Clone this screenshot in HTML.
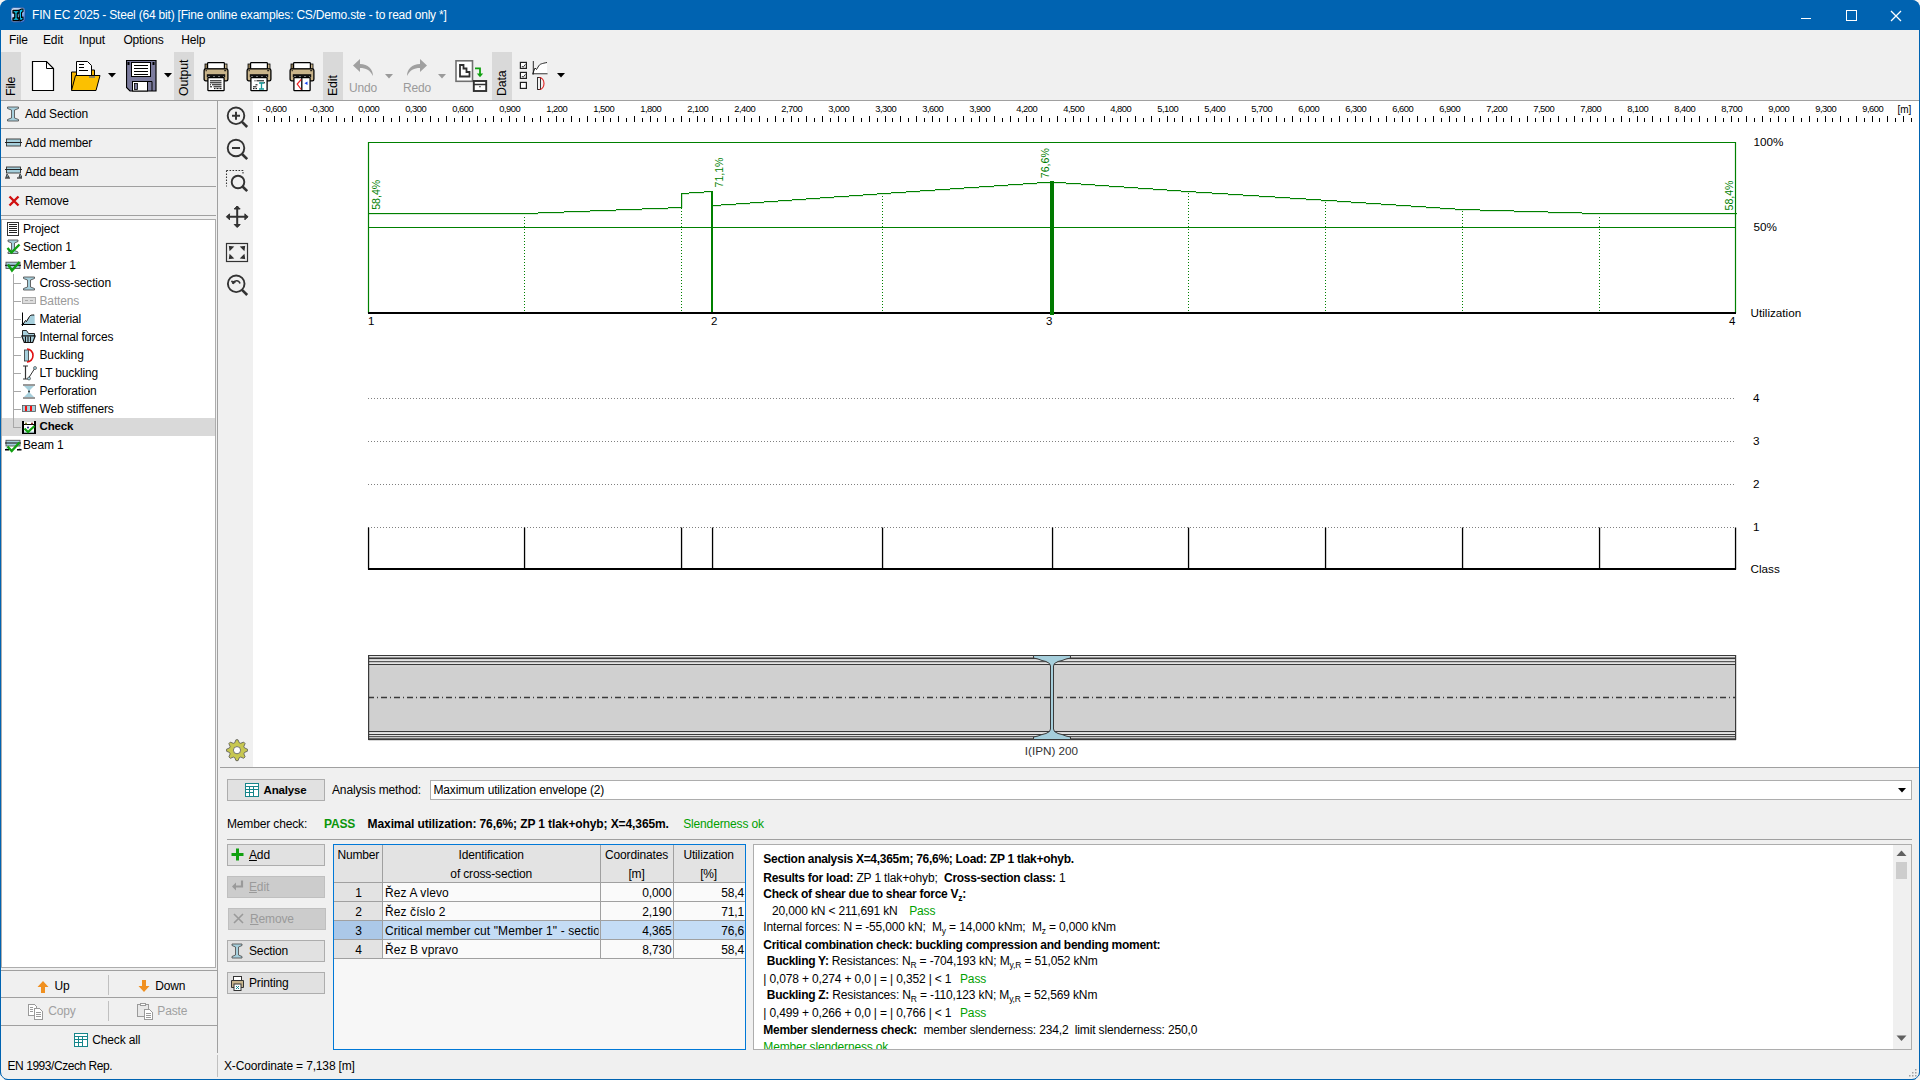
<!DOCTYPE html>
<html><head><meta charset="utf-8"><style>
html,body{margin:0;padding:0;width:1920px;height:1080px;overflow:hidden;background:#f6f5f3;font-family:"Liberation Sans",sans-serif;}
.r{position:absolute;}
.t{position:absolute;white-space:nowrap;letter-spacing:-0.15px;}
b{font-weight:bold;letter-spacing:-0.28px;}
</style></head><body>
<div style="position:absolute;left:0;top:0;width:1920px;height:1080px;border-radius:8px;overflow:hidden;background:#f0f0f0">
<div class="r" style="left:0px;top:0px;width:1920px;height:30px;background:#0063b1;"></div>
<svg class="r" style="left:10px;top:7px" width="17" height="17" viewBox="0 0 17 17">
<defs><linearGradient id="ag" x1="0" y1="0" x2="1" y2="1"><stop offset="0" stop-color="#eef4ff"/><stop offset="0.5" stop-color="#a8c8f8"/><stop offset="1" stop-color="#2f6fd0"/></linearGradient></defs>
<rect x="1" y="0.6" width="14" height="14.6" rx="3" fill="url(#ag)" stroke="#1a4a9a" stroke-width="0.7"/>
<path d="M8.5 3.5l3-1.5h1.5v2.5l-1.5 1v5l1.5-0.5v2.5l-3 1.5z" fill="#10c8f0" stroke="#000" stroke-width="1.1" stroke-linejoin="round"/>
<path d="M3 3.5h6v2.5h-1.8v5h1.8v2.5h-6v-2.5h1.8v-5h-1.8z" fill="#10d8ff" stroke="#000" stroke-width="1.3" stroke-linejoin="round"/>
</svg>
<div class="t" style="left:32px;top:8.84px;font-size:12px;line-height:12px;font-weight:normal;color:#fff;letter-spacing:-0.2px;">FIN EC 2025 - Steel (64 bit) [Fine online examples: CS/Demo.ste - to read only *]</div>
<div class="r" style="left:1801px;top:18px;width:10px;height:1.2px;background:#fff;"></div>
<div class="r" style="left:1846px;top:10px;width:8.5px;height:8.5px;border:1.2px solid #fff"></div>
<svg class="r" style="left:1890px;top:10px" width="12" height="12" viewBox="0 0 12 12"><path d="M1 1L11 11M11 1L1 11" stroke="#fff" stroke-width="1.3"/></svg>
<div class="r" style="left:0px;top:30px;width:1px;height:1050px;background:#0063b1;"></div>
<div class="r" style="left:1919px;top:30px;width:1px;height:1050px;background:#0063b1;"></div>
<div class="r" style="left:0px;top:1079px;width:1920px;height:1px;background:#0063b1;"></div>
<div class="t" style="left:9px;top:33.84px;font-size:12px;line-height:12px;font-weight:normal;color:#000;">File</div>
<div class="t" style="left:43px;top:33.84px;font-size:12px;line-height:12px;font-weight:normal;color:#000;">Edit</div>
<div class="t" style="left:79px;top:33.84px;font-size:12px;line-height:12px;font-weight:normal;color:#000;">Input</div>
<div class="t" style="left:123.4px;top:33.84px;font-size:12px;line-height:12px;font-weight:normal;color:#000;">Options</div>
<div class="t" style="left:181.3px;top:33.84px;font-size:12px;line-height:12px;font-weight:normal;color:#000;">Help</div>
<div class="r" style="left:1px;top:52px;width:20px;height:48px;background:#d9d9d9;"></div>
<div class="t" style="left:11.0px;top:95.5px;font-size:12.4px;line-height:13px;transform-origin:0 0;transform:rotate(-90deg) translate(0,-50%);white-space:nowrap;color:#000">File</div>
<div class="r" style="left:174px;top:52px;width:20px;height:48px;background:#d9d9d9;"></div>
<div class="t" style="left:184.0px;top:95.5px;font-size:12.4px;line-height:13px;transform-origin:0 0;transform:rotate(-90deg) translate(0,-50%);white-space:nowrap;color:#000">Output</div>
<div class="r" style="left:323px;top:52px;width:20px;height:48px;background:#d9d9d9;"></div>
<div class="t" style="left:333.0px;top:95.5px;font-size:12.4px;line-height:13px;transform-origin:0 0;transform:rotate(-90deg) translate(0,-50%);white-space:nowrap;color:#000">Edit</div>
<div class="r" style="left:492px;top:52px;width:20px;height:48px;background:#d9d9d9;"></div>
<div class="t" style="left:502.0px;top:95.5px;font-size:12.4px;line-height:13px;transform-origin:0 0;transform:rotate(-90deg) translate(0,-50%);white-space:nowrap;color:#000">Data</div>
<div class="r" style="left:1px;top:100px;width:1918px;height:1px;background:#a0a0a0;"></div>
<svg class="r" style="left:31px;top:60px" width="24" height="32" viewBox="0 0 24 32">
<path d="M1.5 1.5h14l7 7v22h-21z" fill="#fff" stroke="#000" stroke-width="1.2"/><path d="M15.5 1.5v7h7" fill="none" stroke="#000" stroke-width="1"/></svg>
<svg class="r" style="left:71px;top:60px" width="30" height="32" viewBox="0 0 30 32">
<path d="M0.5 12h9l2-2h12v20h-23z" fill="#f4b400" stroke="#000" stroke-width="1"/>
<path d="M5.5 1.5h11l4 4v18h-15z" fill="#fff" stroke="#000" stroke-width="1"/>
<path d="M8 4.5h5M8 7.5h5M8 10.5h9" stroke="#000" stroke-width="1" shape-rendering="crispEdges"/>
<path d="M0.5 30.5l4-15h24.5l-4 15z" fill="#fcc000" stroke="#000" stroke-width="1"/>
<path d="M18 17h6" stroke="#777" stroke-width="1.5"/></svg>
<svg class="r" style="left:108px;top:73px" width="9" height="5"><path d="M0 0h8l-4 4.5z" fill="#000"/></svg>
<svg class="r" style="left:126px;top:60px" width="31" height="32" viewBox="0 0 31 32">
<path d="M0.5 0.5h29.5v30.5h-26l-3.5-3.5z" fill="#7b7b9d" stroke="#000" stroke-width="1.2"/>
<rect x="5.5" y="2.5" width="19" height="14" fill="#fff" stroke="#000" stroke-width="1"/>
<path d="M8 5.5h14M8 8.5h14M8 11.5h14M8 14h14" stroke="#000" stroke-width="1" shape-rendering="crispEdges"/>
<rect x="6.5" y="21.5" width="15" height="9.5" fill="#fff" stroke="#000" stroke-width="1"/>
<rect x="8.5" y="23.5" width="3" height="6" fill="#7b7b9d" stroke="#000" stroke-width="0.8"/>
<path d="M22 21.5h4v9.5" fill="none" stroke="#000" stroke-width="1"/>
<rect x="1.5" y="2" width="2" height="3" fill="#000"/><rect x="26.5" y="2" width="2" height="3" fill="#000"/></svg>
<svg class="r" style="left:164px;top:73px" width="9" height="5"><path d="M0 0h8l-4 4.5z" fill="#000"/></svg>
<svg class="r" style="left:203px;top:62px" width="27" height="30" viewBox="0 0 27 30">
<rect x="2" y="2" width="3.5" height="5" fill="#8d7a55" stroke="#000" stroke-width="0.8"/><rect x="20.5" y="2" width="3.5" height="5" fill="#c9b48a" stroke="#000" stroke-width="0.8"/>
<rect x="4.6" y="0.6" width="16.8" height="6.4" rx="0.8" fill="#fff" stroke="#000" stroke-width="1.2"/>
<rect x="1.1" y="6.8" width="23.8" height="12" rx="1.6" fill="#c9b48a" stroke="#000" stroke-width="1.3"/>
<rect x="2.6" y="8.2" width="1.2" height="1" fill="#000"/><rect x="21.2" y="8.2" width="2" height="1" fill="#000"/>
<rect x="3.8" y="12.2" width="18.4" height="3" fill="#111"/><path d="M5 14.5h16" stroke="#777" stroke-width="1" stroke-dasharray="2 3"/>
<rect x="4.9" y="15.6" width="16.2" height="13" rx="0.6" fill="#fff" stroke="#000" stroke-width="1.3"/>
<path d="M7 18.8h11.5M7 20.8h11.5M9 22.8h9.5M7 24.8h2M10.5 24.8h8M11 26.6h1.5M13.5 26.6h2M16.5 26.6h2" stroke="#000" stroke-width="1"/><rect x="7" y="22.3" width="1" height="1" fill="#000"/></svg>
<svg class="r" style="left:246px;top:62px" width="27" height="30" viewBox="0 0 27 30">
<rect x="2" y="2" width="3.5" height="5" fill="#8d7a55" stroke="#000" stroke-width="0.8"/><rect x="20.5" y="2" width="3.5" height="5" fill="#c9b48a" stroke="#000" stroke-width="0.8"/>
<rect x="4.6" y="0.6" width="16.8" height="6.4" rx="0.8" fill="#fff" stroke="#000" stroke-width="1.2"/>
<rect x="1.1" y="6.8" width="23.8" height="12" rx="1.6" fill="#c9b48a" stroke="#000" stroke-width="1.3"/>
<rect x="2.6" y="8.2" width="1.2" height="1" fill="#000"/><rect x="21.2" y="8.2" width="2" height="1" fill="#000"/>
<rect x="3.8" y="12.2" width="18.4" height="3" fill="#111"/><path d="M5 14.5h16" stroke="#777" stroke-width="1" stroke-dasharray="2 3"/>
<rect x="4.9" y="15.6" width="16.2" height="13" rx="0.6" fill="#fff" stroke="#000" stroke-width="1.3"/>
<path d="M8.5 18.8h1M10.5 18.8h7.5M14.5 20.8h1M16.5 20.8h1M18 20.8h1M9.5 22.8h2M7 24.8h3.5M7 26.6h1.5M9.5 26.6h1.5" stroke="#000" stroke-width="1"/><path d="M13 21h5M15.5 21v6M13 27h5" stroke="#1a9a9a" stroke-width="1.3"/></svg>
<svg class="r" style="left:289px;top:62px" width="27" height="30" viewBox="0 0 27 30">
<rect x="2" y="2" width="3.5" height="5" fill="#8d7a55" stroke="#000" stroke-width="0.8"/><rect x="20.5" y="2" width="3.5" height="5" fill="#c9b48a" stroke="#000" stroke-width="0.8"/>
<rect x="4.6" y="0.6" width="16.8" height="6.4" rx="0.8" fill="#fff" stroke="#000" stroke-width="1.2"/>
<rect x="1.1" y="6.8" width="23.8" height="12" rx="1.6" fill="#c9b48a" stroke="#000" stroke-width="1.3"/>
<rect x="2.6" y="8.2" width="1.2" height="1" fill="#000"/><rect x="21.2" y="8.2" width="2" height="1" fill="#000"/>
<rect x="3.8" y="12.2" width="18.4" height="3" fill="#111"/><path d="M5 14.5h16" stroke="#777" stroke-width="1" stroke-dasharray="2 3"/>
<rect x="4.9" y="15.6" width="16.2" height="13" rx="0.6" fill="#fff" stroke="#000" stroke-width="1.3"/>
<path d="M12.8 16v12.5" stroke="#000" stroke-width="1.3"/><path d="M12.2 17.5l-4 4.5l4 5.5" fill="none" stroke="#f02020" stroke-width="1.2"/><path d="M18.5 19.5l-3 1.7l3 1.7z" fill="#1040f0"/></svg>
<svg class="r" style="left:352px;top:58px" width="25" height="19" viewBox="0 0 25 19">
<path d="M8 1L1 7.5L8 14v-4c6 0 10 2 13 8c0-7-5-12-13-12z" fill="#a0a0a0"/></svg>
<div class="t" style="left:349px;top:82.34px;font-size:12px;line-height:12px;font-weight:normal;color:#9a9a9a;">Undo</div>
<svg class="r" style="left:385px;top:74px" width="9" height="5"><path d="M0 0h8l-4 4.5z" fill="#9a9a9a"/></svg>
<svg class="r" style="left:403px;top:58px" width="25" height="19" viewBox="0 0 25 19">
<path d="M17 1L24 7.5L17 14v-4c-6 0-10 2-13 8c0-7 5-12 13-12z" fill="#a0a0a0"/></svg>
<div class="t" style="left:403px;top:82.34px;font-size:12px;line-height:12px;font-weight:normal;color:#9a9a9a;">Redo</div>
<svg class="r" style="left:438px;top:74px" width="9" height="5"><path d="M0 0h8l-4 4.5z" fill="#9a9a9a"/></svg>
<svg class="r" style="left:454px;top:59px" width="34" height="34" viewBox="0 0 34 34">
<rect x="2" y="1.8" width="16.5" height="20.5" fill="#fff" stroke="#707070" stroke-width="1.6"/>
<path d="M6 6h3.5v3.5h3v3.5h3v4.5h-9.5z" fill="#fff" stroke="#303030" stroke-width="1.8" stroke-linejoin="miter"/>
<path d="M21 9.3h5v7" fill="none" stroke="#10a010" stroke-width="1.8"/><path d="M22.8 14.5h6.4l-3.2 3.8z" fill="#10a010"/>
<rect x="19.8" y="22" width="12.4" height="10" fill="#fff" stroke="#303030" stroke-width="1.9"/>
<path d="M20 25.5h12" stroke="#303030" stroke-width="1.5"/><rect x="25.3" y="27" width="1.3" height="1.3" fill="#303030"/></svg>
<svg class="r" style="left:519px;top:61px" width="30" height="30" viewBox="0 0 30 30">
<rect x="1.4" y="1.4" width="6" height="6" fill="#fff" stroke="#202020" stroke-width="1.2"/><path d="M2.8 5l1.3 1.3l2.4-3" fill="none" stroke="#202020" stroke-width="0.9"/>
<rect x="1.4" y="11.4" width="6" height="6" fill="#fff" stroke="#202020" stroke-width="1.2"/><path d="M2.8 15l1.3 1.3l2.4-3" fill="none" stroke="#202020" stroke-width="0.9"/>
<rect x="1.4" y="21.4" width="6" height="6" fill="#fff" stroke="#202020" stroke-width="1.2"/>
<path d="M14 11.5l2-4.5l1.5 1.5l2.5-4c1-1.5 3-2 8-3v12.5h-14z" fill="#fff"/>
<path d="M14.3 0v13.5M13 12.8h15.5" fill="none" stroke="#111" stroke-width="0.9"/><path d="M14 12l2-5l1.5 1.5l2.5-4c1-1.5 3-2 8-3" fill="none" stroke="#111" stroke-width="0.9"/>
<rect x="18.6" y="16.5" width="2.8" height="12" fill="#fff" stroke="#111" stroke-width="0.9"/><path d="M20.5 16.5a4.5 6 0 0 1 0 12" fill="none" stroke="#e02020" stroke-width="1.1"/></svg>
<svg class="r" style="left:557px;top:73px" width="9" height="5"><path d="M0 0h8l-4 4.5z" fill="#000"/></svg>
<div class="r" style="left:1px;top:128px;width:215px;height:1px;background:#a0a0a0;"></div>
<div class="t" style="left:25px;top:108.14px;font-size:12px;line-height:12px;font-weight:normal;color:#000;">Add Section</div>
<div class="r" style="left:1px;top:157px;width:215px;height:1px;background:#a0a0a0;"></div>
<div class="t" style="left:25px;top:137.14px;font-size:12px;line-height:12px;font-weight:normal;color:#000;">Add member</div>
<div class="r" style="left:1px;top:186px;width:215px;height:1px;background:#a0a0a0;"></div>
<div class="t" style="left:25px;top:166.14px;font-size:12px;line-height:12px;font-weight:normal;color:#000;">Add beam</div>
<div class="r" style="left:1px;top:215px;width:215px;height:1px;background:#a0a0a0;"></div>
<div class="t" style="left:25px;top:195.14px;font-size:12px;line-height:12px;font-weight:normal;color:#000;">Remove</div>
<svg class="r" style="left:6px;top:106px" width="14" height="16" viewBox="0 0 14 16">
<path d="M1.5 1h11v1.5l-4 1.5v8l4 1.5v1.5h-11v-1.5l4-1.5v-8l-4-1.5z" fill="#a6cfdc" stroke="#555" stroke-width="0.9"/></svg>
<svg class="r" style="left:5px;top:138px" width="17" height="9" viewBox="0 0 17 9">
<rect x="1.5" y="1" width="14" height="7" fill="#a6cfdc" stroke="#333" stroke-width="0.9"/><path d="M0 4.5h17" stroke="#222" stroke-width="1"/></svg>
<svg class="r" style="left:5px;top:166px" width="17" height="13" viewBox="0 0 17 13">
<rect x="1.5" y="1" width="14" height="6" fill="#a6cfdc" stroke="#333" stroke-width="0.9"/><path d="M0 3.5h17" stroke="#222" stroke-width="1"/>
<path d="M2 8l2 3h-3zM15 8l2 3h-3z" fill="#a6cfdc" stroke="#222" stroke-width="0.8"/><path d="M0 12h5M12 12h5" stroke="#000" stroke-width="1.2"/></svg>
<svg class="r" style="left:8px;top:195px" width="12" height="12" viewBox="0 0 12 12"><path d="M1.5 1.5L10.5 10.5M10.5 1.5L1.5 10.5" stroke="#d01010" stroke-width="2.4"/></svg>
<div class="r" style="left:1px;top:219px;width:215px;height:749px;background:#fff;border:1px solid #adadad;box-sizing:border-box"></div>
<div class="r" style="left:2px;top:418px;width:213px;height:18px;background:#d9d9d9;"></div>
<svg class="r" style="left:0;top:270px" width="40" height="170" shape-rendering="crispEdges"><path d="M13.5 4V157M13 13.5h8M13 31.5h8M13 49.5h8M13 67.5h8M13 85.5h8M13 103.5h8M13 121.5h8M13 139.5h8M13 157.5h8" stroke="#a8a8a8" stroke-width="1"/></svg>
<div class="t" style="left:23px;top:223.04px;font-size:12px;line-height:12px;font-weight:normal;color:#000;">Project</div>
<div class="t" style="left:23px;top:241.04px;font-size:12px;line-height:12px;font-weight:normal;color:#000;">Section 1</div>
<div class="t" style="left:23px;top:259.04px;font-size:12px;line-height:12px;font-weight:normal;color:#000;">Member 1</div>
<div class="t" style="left:39.5px;top:277.04px;font-size:12px;line-height:12px;font-weight:normal;color:#000;">Cross-section</div>
<div class="t" style="left:39.5px;top:295.04px;font-size:12px;line-height:12px;font-weight:normal;color:#9a9a9a;">Battens</div>
<div class="t" style="left:39.5px;top:313.04px;font-size:12px;line-height:12px;font-weight:normal;color:#000;">Material</div>
<div class="t" style="left:39.5px;top:331.04px;font-size:12px;line-height:12px;font-weight:normal;color:#000;">Internal forces</div>
<div class="t" style="left:39.5px;top:349.04px;font-size:12px;line-height:12px;font-weight:normal;color:#000;">Buckling</div>
<div class="t" style="left:39.5px;top:367.04px;font-size:12px;line-height:12px;font-weight:normal;color:#000;">LT buckling</div>
<div class="t" style="left:39.5px;top:385.04px;font-size:12px;line-height:12px;font-weight:normal;color:#000;">Perforation</div>
<div class="t" style="left:39.5px;top:403.04px;font-size:12px;line-height:12px;font-weight:normal;color:#000;">Web stiffeners</div>
<div class="t" style="left:39.5px;top:421.47px;font-size:11.5px;line-height:11.5px;font-weight:bold;color:#000;">Check</div>
<div class="t" style="left:23px;top:439.04px;font-size:12px;line-height:12px;font-weight:normal;color:#000;">Beam 1</div>
<svg class="r" style="left:6px;top:221px" width="14" height="16" viewBox="0 0 14 16" shape-rendering="crispEdges"><rect x="1.5" y="1.5" width="11" height="13" fill="#fff" stroke="#333" stroke-width="1"/><path d="M3 3.5h8M3 5.5h8M3 7.5h8M3 9.5h8M3 11.5h8" stroke="#222" stroke-width="1"/></svg>
<svg class="r" style="left:6px;top:239px" width="15" height="16" viewBox="0 0 15 16"><path d="M2 1h10v1.5l-3.5 1.5v7.5l3.5 1.5v1.5h-10v-1.5l3.5-1.5v-7.5l-3.5-1.5z" fill="#a6cfdc" stroke="#555" stroke-width="0.9"/><path d="M1.5 9l4 4.5l8-8" fill="none" stroke="#11a011" stroke-width="2.4"/></svg>
<svg class="r" style="left:4px;top:258px" width="18" height="16" viewBox="0 0 18 16"><rect x="2" y="4.2" width="14" height="6.3" fill="#a6cfdc" stroke="#555" stroke-width="0.9"/><path d="M1 7.3h16" stroke="#111" stroke-width="1"/><path d="M4 6.5l4 6l7.5-8.5" fill="none" stroke="#11a011" stroke-width="2.4"/></svg>
<svg class="r" style="left:4px;top:438px" width="18" height="15" viewBox="0 0 18 15"><rect x="2" y="2.3" width="14" height="5.7" fill="#a6cfdc" stroke="#555" stroke-width="0.9"/><path d="M1 5h16" stroke="#111" stroke-width="1"/><path d="M2.5 9.5l2 2.3h-3.5zM15.5 9.5l2 2.3h-3.5z" fill="#a6cfdc"/><path d="M1 11.8h4M13 11.8h4.5" stroke="#000" stroke-width="1.5"/><path d="M3.5 8.5l4.2 4.5l7.8-8.5" fill="none" stroke="#11a011" stroke-width="2.4"/></svg>
<svg class="r" style="left:22px;top:276px" width="14" height="15" viewBox="0 0 14 15"><path d="M1.5 1h11v1.5l-4 1.5v7l4 1.5v1.5h-11v-1.5l4-1.5v-7l-4-1.5z" fill="#a6cfdc" stroke="#555" stroke-width="0.9"/></svg>
<svg class="r" style="left:22px;top:296px" width="14" height="9" viewBox="0 0 14 9"><rect x="0.5" y="1.5" width="13" height="6" fill="#ddd" stroke="#aaa" stroke-width="1"/><path d="M3 4.5h3M8 4.5h3" stroke="#aaa" stroke-width="1"/></svg>
<svg class="r" style="left:21px;top:312px" width="15" height="15" viewBox="0 0 15 15"><path d="M2 12.5l3-4l1 1l3-5c1-1.5 2-1.5 4.7-1.5v9.5z" fill="#a6cfdc"/><path d="M1.5 0.5v13.5M0.5 12.5h14M1.5 13l3-4.5l1 1l3-5c1-1.5 2-1.5 4.7-1.5" fill="none" stroke="#000" stroke-width="1"/></svg>
<svg class="r" style="left:21px;top:329px" width="15" height="15" viewBox="0 0 15 15"><path d="M1.5 1.5h4l2 3h6v2.5h-12z" fill="#a6cfdc" stroke="#111" stroke-width="0.9"/><path d="M0.8 7h13.4l-2.5 6.5h-8.4z" fill="#a6cfdc" stroke="#111" stroke-width="1.2"/><path d="M4.5 7.5v5.5M7 7.5v5.5M9.5 7.5v5.5M12.5 6.8h1.6" stroke="#111" stroke-width="1.1"/></svg>
<svg class="r" style="left:23px;top:348px" width="12" height="15" viewBox="0 0 12 15"><rect x="1.5" y="2" width="4" height="11" fill="#a6cfdc" stroke="#333" stroke-width="0.8"/><path d="M4 1a6 6.5 0 0 1 0 13" fill="none" stroke="#e01010" stroke-width="1.6"/></svg>
<svg class="r" style="left:22px;top:365px" width="15" height="16" viewBox="0 0 15 16"><path d="M1 1h5M3.5 1v13M1 14h5" stroke="#333" stroke-width="1.2"/><path d="M6 14l7-11" stroke="#333" stroke-width="1"/><circle cx="13" cy="3" r="1.5" fill="#a6cfdc" stroke="#333" stroke-width="0.6"/><circle cx="7" cy="13.5" r="1.5" fill="#a6cfdc" stroke="#333" stroke-width="0.6"/></svg>
<svg class="r" style="left:22px;top:384px" width="14" height="15" viewBox="0 0 14 15"><path d="M1 1h12M1 14h12" stroke="#333" stroke-width="1"/><path d="M2 2h10l-4 4v3l4 4h-10l4-4v-3z" fill="#a6cfdc"/><circle cx="7" cy="7.5" r="1" fill="#333"/></svg>
<svg class="r" style="left:22px;top:404px" width="14" height="9" viewBox="0 0 14 9"><rect x="0.5" y="1.5" width="13" height="6" fill="#a6cfdc" stroke="#555" stroke-width="0.8"/><path d="M4 2v5M9 2v5" stroke="#f01010" stroke-width="2"/></svg>
<svg class="r" style="left:22px;top:421px" width="14" height="13" viewBox="0 0 14 13"><rect x="1" y="1" width="12" height="11" fill="#fff"/><path d="M1 0v12.6h12V0" fill="none" stroke="#000" stroke-width="2"/><path d="M1 3.5h12" stroke="#000" stroke-width="1"/><circle cx="4" cy="2.6" r="1" fill="#7a7a20"/><circle cx="10" cy="2.6" r="1" fill="#8a2020"/><circle cx="6" cy="6.5" r="1" fill="#202080"/><rect x="2" y="10.5" width="10" height="1" fill="#a6cfdc"/><path d="M2.5 7.5l3.5 3.5l6.5-6" fill="none" stroke="#11a011" stroke-width="2.3"/></svg>
<div class="r" style="left:1px;top:970px;width:216px;height:1px;background:#a0a0a0;"></div>
<div class="r" style="left:108px;top:975px;width:1px;height:20px;background:#c0c0c0;"></div>
<div class="r" style="left:1px;top:997px;width:216px;height:1px;background:#a0a0a0;"></div>
<div class="r" style="left:108px;top:1001px;width:1px;height:20px;background:#c0c0c0;"></div>
<div class="r" style="left:1px;top:1025px;width:216px;height:1px;background:#a0a0a0;"></div>
<div class="t" style="left:54.6px;top:979.84px;font-size:12px;line-height:12px;font-weight:normal;color:#000;">Up</div>
<div class="t" style="left:155.2px;top:979.84px;font-size:12px;line-height:12px;font-weight:normal;color:#000;">Down</div>
<div class="t" style="left:48.3px;top:1004.84px;font-size:12px;line-height:12px;font-weight:normal;color:#a0a0a0;">Copy</div>
<div class="t" style="left:157.3px;top:1004.84px;font-size:12px;line-height:12px;font-weight:normal;color:#a0a0a0;">Paste</div>
<div class="t" style="left:92.3px;top:1033.64px;font-size:12px;line-height:12px;font-weight:normal;color:#000;">Check all</div>
<svg class="r" style="left:37px;top:981px" width="12" height="12" viewBox="0 0 12 12"><path d="M6 0L11.5 6H8v6H4V6H0.5z" fill="#f09020"/></svg>
<svg class="r" style="left:138px;top:980px" width="12" height="12" viewBox="0 0 12 12"><path d="M6 12L11.5 6H8V0H4v6H0.5z" fill="#f09020"/></svg>
<svg class="r" style="left:28px;top:1004px" width="16" height="16" viewBox="0 0 16 16" shape-rendering="crispEdges"><path d="M0.5 0.5h6l2 2v9h-8z" fill="#fff" stroke="#9a9a9a" stroke-width="1"/><path d="M6.5 4.5h5l3 3v8h-8z" fill="#fff" stroke="#9a9a9a" stroke-width="1"/><path d="M2 3.5h3M2 5.5h3M2 7.5h3M8 8.5h5M8 10.5h5M8 12.5h5" stroke="#9a9a9a" stroke-width="1"/></svg>
<svg class="r" style="left:137px;top:1003px" width="17" height="17" viewBox="0 0 17 17" shape-rendering="crispEdges"><path d="M0.5 1.5h11v12h-11z" fill="#e8e8e8" stroke="#9a9a9a" stroke-width="1"/><rect x="3.5" y="0.5" width="5" height="2" fill="#fff" stroke="#9a9a9a" stroke-width="1"/><path d="M7.5 6.5h5l3 3v7h-8z" fill="#fff" stroke="#9a9a9a" stroke-width="1"/><path d="M9 10.5h5M9 12.5h5M9 14.5h5" stroke="#9a9a9a" stroke-width="1"/></svg>
<svg class="r" style="left:74px;top:1033px" width="14" height="14" viewBox="0 0 14 14" shape-rendering="crispEdges"><path d="M0 0h14v14h-14zM1 1H13V3H1zM1 4H4V6H1zM1 7H4V9H1zM1 10H4V13H1zM5 4H8V6H5zM5 7H8V9H5zM5 10H8V13H5zM9 4H13V6H9zM9 7H13V13H9z" fill="#15858a" fill-rule="evenodd"/><path d="M1 1H13V3H1zM1 4H4V6H1zM1 7H4V9H1zM1 10H4V13H1zM5 4H8V6H5zM5 7H8V9H5zM5 10H8V13H5zM9 4H13V6H9zM9 7H13V13H9z" fill="#fff"/></svg>
<div class="r" style="left:217px;top:1055px;width:1px;height:22px;background:#c0c0c0;"></div>
<div class="t" style="left:7.5px;top:1059.84px;font-size:12px;line-height:12px;font-weight:normal;color:#000;letter-spacing:-0.45px;">EN 1993/Czech Rep.</div>
<div class="t" style="left:224px;top:1059.84px;font-size:12px;line-height:12px;font-weight:normal;color:#000;">X-Coordinate = 7,138 [m]</div>
<div class="r" style="left:217px;top:100px;width:1px;height:953px;background:#a0a0a0;"></div>
<div class="r" style="left:253px;top:101px;width:1666px;height:666px;background:#fff;"></div>
<div class="r" style="left:220px;top:767px;width:1699px;height:1px;background:#a0a0a0;"></div>
<svg class="r" style="left:222px;top:101px" width="30" height="200" viewBox="0 0 30 200">
<g fill="none" stroke="#333" stroke-width="1.9">
<circle cx="14" cy="14.8" r="8.3"/><path d="M20 20.8l5.2 5.2" stroke-width="2.6"/><path d="M10 14.8h8M14 10.8v8" stroke-width="2"/>
<circle cx="14" cy="47" r="8.3"/><path d="M20 53l5.2 5.2" stroke-width="2.6"/><path d="M10 47h8" stroke-width="2"/>
<path d="M4.5 69.5h16.5v3M4.5 69.5v16" stroke-dasharray="1.6 1.4" stroke-width="1.1"/>
<circle cx="16" cy="81" r="6.3"/><path d="M20.5 85.5l4.7 4.7" stroke-width="2.6"/>
<rect x="4.5" y="142.5" width="21" height="18" stroke-width="1.2"/>
<circle cx="14.2" cy="182.8" r="8.3"/><path d="M20 188.8l5.2 5.2" stroke-width="2.6"/>
<path d="M11 182c1.5-3 6-3 7 0.5" stroke-width="1.6"/>
</g>
<path d="M15.2 105v21M4.7 115.8h21" stroke="#333" stroke-width="2"/>
<path d="M15.2 105l-3 3h6zM15.2 126.5l-3-3h6zM4.5 115.8l3-3v6zM25.9 115.8l-3-3v6z" fill="#333" stroke="#333" stroke-width="1"/>
<path d="M7.5 145.5l3.5 0.5l-3 3zM22.5 145.5l-3.5 0.5l3 3zM7.5 157.5l3.5-0.5l-3-3zM22.5 157.5l-3.5-0.5l3-3z" fill="#333" stroke="#333" stroke-width="1.2"/>
<path d="M9.5 180l1.5 3l2.5-2z" fill="#333" stroke="#333" stroke-width="1"/>
</svg>
<svg class="r" style="left:0;top:0" width="260" height="770"><polygon points="247.45,749.15 247.45,751.21 244.47,752.45 243.89,753.86 245.13,756.85 243.68,758.30 240.69,757.07 239.28,757.66 238.05,760.65 235.99,760.65 234.75,757.67 233.34,757.09 230.35,758.33 228.90,756.88 230.13,753.89 229.54,752.48 226.55,751.25 226.55,749.19 229.53,747.95 230.11,746.54 228.87,743.55 230.32,742.10 233.31,743.33 234.72,742.74 235.95,739.75 238.01,739.75 239.25,742.73 240.66,743.31 243.65,742.07 245.10,743.52 243.87,746.51 244.46,747.92" fill="#c7c751" stroke="#555" stroke-width="0.8" stroke-linejoin="round"/><circle cx="237" cy="750.2" r="3.6" fill="#fff" stroke="#555" stroke-width="0.8"/></svg>
<svg class="r" style="left:0;top:0;font-family:'Liberation Sans',sans-serif" width="1920" height="770"><rect x="258" y="116" width="1" height="6" fill="#000"/><rect x="266" y="118" width="1" height="4" fill="#000"/><rect x="274" y="116" width="1" height="6" fill="#000"/><rect x="281" y="118" width="1" height="4" fill="#000"/><rect x="289" y="116" width="1" height="6" fill="#000"/><rect x="297" y="118" width="1" height="4" fill="#000"/><rect x="305" y="116" width="1" height="6" fill="#000"/><rect x="313" y="118" width="1" height="4" fill="#000"/><rect x="321" y="116" width="1" height="6" fill="#000"/><rect x="328" y="118" width="1" height="4" fill="#000"/><rect x="336" y="116" width="1" height="6" fill="#000"/><rect x="344" y="118" width="1" height="4" fill="#000"/><rect x="352" y="116" width="1" height="6" fill="#000"/><rect x="360" y="118" width="1" height="4" fill="#000"/><rect x="368" y="116" width="1" height="6" fill="#000"/><rect x="375" y="118" width="1" height="4" fill="#000"/><rect x="383" y="116" width="1" height="6" fill="#000"/><rect x="391" y="118" width="1" height="4" fill="#000"/><rect x="399" y="116" width="1" height="6" fill="#000"/><rect x="407" y="118" width="1" height="4" fill="#000"/><rect x="415" y="116" width="1" height="6" fill="#000"/><rect x="422" y="118" width="1" height="4" fill="#000"/><rect x="430" y="116" width="1" height="6" fill="#000"/><rect x="438" y="118" width="1" height="4" fill="#000"/><rect x="446" y="116" width="1" height="6" fill="#000"/><rect x="454" y="118" width="1" height="4" fill="#000"/><rect x="462" y="116" width="1" height="6" fill="#000"/><rect x="469" y="118" width="1" height="4" fill="#000"/><rect x="477" y="116" width="1" height="6" fill="#000"/><rect x="485" y="118" width="1" height="4" fill="#000"/><rect x="493" y="116" width="1" height="6" fill="#000"/><rect x="501" y="118" width="1" height="4" fill="#000"/><rect x="509" y="116" width="1" height="6" fill="#000"/><rect x="516" y="118" width="1" height="4" fill="#000"/><rect x="524" y="116" width="1" height="6" fill="#000"/><rect x="532" y="118" width="1" height="4" fill="#000"/><rect x="540" y="116" width="1" height="6" fill="#000"/><rect x="548" y="118" width="1" height="4" fill="#000"/><rect x="556" y="116" width="1" height="6" fill="#000"/><rect x="563" y="118" width="1" height="4" fill="#000"/><rect x="571" y="116" width="1" height="6" fill="#000"/><rect x="579" y="118" width="1" height="4" fill="#000"/><rect x="587" y="116" width="1" height="6" fill="#000"/><rect x="595" y="118" width="1" height="4" fill="#000"/><rect x="603" y="116" width="1" height="6" fill="#000"/><rect x="610" y="118" width="1" height="4" fill="#000"/><rect x="618" y="116" width="1" height="6" fill="#000"/><rect x="626" y="118" width="1" height="4" fill="#000"/><rect x="634" y="116" width="1" height="6" fill="#000"/><rect x="642" y="118" width="1" height="4" fill="#000"/><rect x="650" y="116" width="1" height="6" fill="#000"/><rect x="657" y="118" width="1" height="4" fill="#000"/><rect x="665" y="116" width="1" height="6" fill="#000"/><rect x="673" y="118" width="1" height="4" fill="#000"/><rect x="681" y="116" width="1" height="6" fill="#000"/><rect x="689" y="118" width="1" height="4" fill="#000"/><rect x="697" y="116" width="1" height="6" fill="#000"/><rect x="704" y="118" width="1" height="4" fill="#000"/><rect x="712" y="116" width="1" height="6" fill="#000"/><rect x="720" y="118" width="1" height="4" fill="#000"/><rect x="728" y="116" width="1" height="6" fill="#000"/><rect x="736" y="118" width="1" height="4" fill="#000"/><rect x="744" y="116" width="1" height="6" fill="#000"/><rect x="751" y="118" width="1" height="4" fill="#000"/><rect x="759" y="116" width="1" height="6" fill="#000"/><rect x="767" y="118" width="1" height="4" fill="#000"/><rect x="775" y="116" width="1" height="6" fill="#000"/><rect x="783" y="118" width="1" height="4" fill="#000"/><rect x="791" y="116" width="1" height="6" fill="#000"/><rect x="798" y="118" width="1" height="4" fill="#000"/><rect x="806" y="116" width="1" height="6" fill="#000"/><rect x="814" y="118" width="1" height="4" fill="#000"/><rect x="822" y="116" width="1" height="6" fill="#000"/><rect x="830" y="118" width="1" height="4" fill="#000"/><rect x="838" y="116" width="1" height="6" fill="#000"/><rect x="845" y="118" width="1" height="4" fill="#000"/><rect x="853" y="116" width="1" height="6" fill="#000"/><rect x="861" y="118" width="1" height="4" fill="#000"/><rect x="869" y="116" width="1" height="6" fill="#000"/><rect x="877" y="118" width="1" height="4" fill="#000"/><rect x="885" y="116" width="1" height="6" fill="#000"/><rect x="892" y="118" width="1" height="4" fill="#000"/><rect x="900" y="116" width="1" height="6" fill="#000"/><rect x="908" y="118" width="1" height="4" fill="#000"/><rect x="916" y="116" width="1" height="6" fill="#000"/><rect x="924" y="118" width="1" height="4" fill="#000"/><rect x="932" y="116" width="1" height="6" fill="#000"/><rect x="939" y="118" width="1" height="4" fill="#000"/><rect x="947" y="116" width="1" height="6" fill="#000"/><rect x="955" y="118" width="1" height="4" fill="#000"/><rect x="963" y="116" width="1" height="6" fill="#000"/><rect x="971" y="118" width="1" height="4" fill="#000"/><rect x="979" y="116" width="1" height="6" fill="#000"/><rect x="986" y="118" width="1" height="4" fill="#000"/><rect x="994" y="116" width="1" height="6" fill="#000"/><rect x="1002" y="118" width="1" height="4" fill="#000"/><rect x="1010" y="116" width="1" height="6" fill="#000"/><rect x="1018" y="118" width="1" height="4" fill="#000"/><rect x="1026" y="116" width="1" height="6" fill="#000"/><rect x="1033" y="118" width="1" height="4" fill="#000"/><rect x="1041" y="116" width="1" height="6" fill="#000"/><rect x="1049" y="118" width="1" height="4" fill="#000"/><rect x="1057" y="116" width="1" height="6" fill="#000"/><rect x="1065" y="118" width="1" height="4" fill="#000"/><rect x="1073" y="116" width="1" height="6" fill="#000"/><rect x="1080" y="118" width="1" height="4" fill="#000"/><rect x="1088" y="116" width="1" height="6" fill="#000"/><rect x="1096" y="118" width="1" height="4" fill="#000"/><rect x="1104" y="116" width="1" height="6" fill="#000"/><rect x="1112" y="118" width="1" height="4" fill="#000"/><rect x="1120" y="116" width="1" height="6" fill="#000"/><rect x="1127" y="118" width="1" height="4" fill="#000"/><rect x="1135" y="116" width="1" height="6" fill="#000"/><rect x="1143" y="118" width="1" height="4" fill="#000"/><rect x="1151" y="116" width="1" height="6" fill="#000"/><rect x="1159" y="118" width="1" height="4" fill="#000"/><rect x="1167" y="116" width="1" height="6" fill="#000"/><rect x="1174" y="118" width="1" height="4" fill="#000"/><rect x="1182" y="116" width="1" height="6" fill="#000"/><rect x="1190" y="118" width="1" height="4" fill="#000"/><rect x="1198" y="116" width="1" height="6" fill="#000"/><rect x="1206" y="118" width="1" height="4" fill="#000"/><rect x="1214" y="116" width="1" height="6" fill="#000"/><rect x="1221" y="118" width="1" height="4" fill="#000"/><rect x="1229" y="116" width="1" height="6" fill="#000"/><rect x="1237" y="118" width="1" height="4" fill="#000"/><rect x="1245" y="116" width="1" height="6" fill="#000"/><rect x="1253" y="118" width="1" height="4" fill="#000"/><rect x="1261" y="116" width="1" height="6" fill="#000"/><rect x="1268" y="118" width="1" height="4" fill="#000"/><rect x="1276" y="116" width="1" height="6" fill="#000"/><rect x="1284" y="118" width="1" height="4" fill="#000"/><rect x="1292" y="116" width="1" height="6" fill="#000"/><rect x="1300" y="118" width="1" height="4" fill="#000"/><rect x="1308" y="116" width="1" height="6" fill="#000"/><rect x="1315" y="118" width="1" height="4" fill="#000"/><rect x="1323" y="116" width="1" height="6" fill="#000"/><rect x="1331" y="118" width="1" height="4" fill="#000"/><rect x="1339" y="116" width="1" height="6" fill="#000"/><rect x="1347" y="118" width="1" height="4" fill="#000"/><rect x="1355" y="116" width="1" height="6" fill="#000"/><rect x="1362" y="118" width="1" height="4" fill="#000"/><rect x="1370" y="116" width="1" height="6" fill="#000"/><rect x="1378" y="118" width="1" height="4" fill="#000"/><rect x="1386" y="116" width="1" height="6" fill="#000"/><rect x="1394" y="118" width="1" height="4" fill="#000"/><rect x="1402" y="116" width="1" height="6" fill="#000"/><rect x="1409" y="118" width="1" height="4" fill="#000"/><rect x="1417" y="116" width="1" height="6" fill="#000"/><rect x="1425" y="118" width="1" height="4" fill="#000"/><rect x="1433" y="116" width="1" height="6" fill="#000"/><rect x="1441" y="118" width="1" height="4" fill="#000"/><rect x="1449" y="116" width="1" height="6" fill="#000"/><rect x="1456" y="118" width="1" height="4" fill="#000"/><rect x="1464" y="116" width="1" height="6" fill="#000"/><rect x="1472" y="118" width="1" height="4" fill="#000"/><rect x="1480" y="116" width="1" height="6" fill="#000"/><rect x="1488" y="118" width="1" height="4" fill="#000"/><rect x="1496" y="116" width="1" height="6" fill="#000"/><rect x="1503" y="118" width="1" height="4" fill="#000"/><rect x="1511" y="116" width="1" height="6" fill="#000"/><rect x="1519" y="118" width="1" height="4" fill="#000"/><rect x="1527" y="116" width="1" height="6" fill="#000"/><rect x="1535" y="118" width="1" height="4" fill="#000"/><rect x="1543" y="116" width="1" height="6" fill="#000"/><rect x="1550" y="118" width="1" height="4" fill="#000"/><rect x="1558" y="116" width="1" height="6" fill="#000"/><rect x="1566" y="118" width="1" height="4" fill="#000"/><rect x="1574" y="116" width="1" height="6" fill="#000"/><rect x="1582" y="118" width="1" height="4" fill="#000"/><rect x="1590" y="116" width="1" height="6" fill="#000"/><rect x="1597" y="118" width="1" height="4" fill="#000"/><rect x="1605" y="116" width="1" height="6" fill="#000"/><rect x="1613" y="118" width="1" height="4" fill="#000"/><rect x="1621" y="116" width="1" height="6" fill="#000"/><rect x="1629" y="118" width="1" height="4" fill="#000"/><rect x="1637" y="116" width="1" height="6" fill="#000"/><rect x="1644" y="118" width="1" height="4" fill="#000"/><rect x="1652" y="116" width="1" height="6" fill="#000"/><rect x="1660" y="118" width="1" height="4" fill="#000"/><rect x="1668" y="116" width="1" height="6" fill="#000"/><rect x="1676" y="118" width="1" height="4" fill="#000"/><rect x="1684" y="116" width="1" height="6" fill="#000"/><rect x="1691" y="118" width="1" height="4" fill="#000"/><rect x="1699" y="116" width="1" height="6" fill="#000"/><rect x="1707" y="118" width="1" height="4" fill="#000"/><rect x="1715" y="116" width="1" height="6" fill="#000"/><rect x="1723" y="118" width="1" height="4" fill="#000"/><rect x="1731" y="116" width="1" height="6" fill="#000"/><rect x="1738" y="118" width="1" height="4" fill="#000"/><rect x="1746" y="116" width="1" height="6" fill="#000"/><rect x="1754" y="118" width="1" height="4" fill="#000"/><rect x="1762" y="116" width="1" height="6" fill="#000"/><rect x="1770" y="118" width="1" height="4" fill="#000"/><rect x="1778" y="116" width="1" height="6" fill="#000"/><rect x="1785" y="118" width="1" height="4" fill="#000"/><rect x="1793" y="116" width="1" height="6" fill="#000"/><rect x="1801" y="118" width="1" height="4" fill="#000"/><rect x="1809" y="116" width="1" height="6" fill="#000"/><rect x="1817" y="118" width="1" height="4" fill="#000"/><rect x="1825" y="116" width="1" height="6" fill="#000"/><rect x="1832" y="118" width="1" height="4" fill="#000"/><rect x="1840" y="116" width="1" height="6" fill="#000"/><rect x="1848" y="118" width="1" height="4" fill="#000"/><rect x="1856" y="116" width="1" height="6" fill="#000"/><rect x="1864" y="118" width="1" height="4" fill="#000"/><rect x="1872" y="116" width="1" height="6" fill="#000"/><rect x="1879" y="118" width="1" height="4" fill="#000"/><rect x="1887" y="116" width="1" height="6" fill="#000"/><rect x="1895" y="118" width="1" height="4" fill="#000"/><rect x="1903" y="116" width="1" height="6" fill="#000"/><rect x="1911" y="118" width="1" height="4" fill="#000"/><text x="274.64" y="112" text-anchor="middle" font-size="9.4px" letter-spacing="-0.5">-0,600</text><text x="321.65" y="112" text-anchor="middle" font-size="9.4px" letter-spacing="-0.5">-0,300</text><text x="368.65" y="112" text-anchor="middle" font-size="9.4px" letter-spacing="-0.5">0,000</text><text x="415.65" y="112" text-anchor="middle" font-size="9.4px" letter-spacing="-0.5">0,300</text><text x="462.66" y="112" text-anchor="middle" font-size="9.4px" letter-spacing="-0.5">0,600</text><text x="509.66" y="112" text-anchor="middle" font-size="9.4px" letter-spacing="-0.5">0,900</text><text x="556.67" y="112" text-anchor="middle" font-size="9.4px" letter-spacing="-0.5">1,200</text><text x="603.67" y="112" text-anchor="middle" font-size="9.4px" letter-spacing="-0.5">1,500</text><text x="650.67" y="112" text-anchor="middle" font-size="9.4px" letter-spacing="-0.5">1,800</text><text x="697.68" y="112" text-anchor="middle" font-size="9.4px" letter-spacing="-0.5">2,100</text><text x="744.68" y="112" text-anchor="middle" font-size="9.4px" letter-spacing="-0.5">2,400</text><text x="791.69" y="112" text-anchor="middle" font-size="9.4px" letter-spacing="-0.5">2,700</text><text x="838.69" y="112" text-anchor="middle" font-size="9.4px" letter-spacing="-0.5">3,000</text><text x="885.69" y="112" text-anchor="middle" font-size="9.4px" letter-spacing="-0.5">3,300</text><text x="932.70" y="112" text-anchor="middle" font-size="9.4px" letter-spacing="-0.5">3,600</text><text x="979.70" y="112" text-anchor="middle" font-size="9.4px" letter-spacing="-0.5">3,900</text><text x="1026.71" y="112" text-anchor="middle" font-size="9.4px" letter-spacing="-0.5">4,200</text><text x="1073.71" y="112" text-anchor="middle" font-size="9.4px" letter-spacing="-0.5">4,500</text><text x="1120.71" y="112" text-anchor="middle" font-size="9.4px" letter-spacing="-0.5">4,800</text><text x="1167.72" y="112" text-anchor="middle" font-size="9.4px" letter-spacing="-0.5">5,100</text><text x="1214.72" y="112" text-anchor="middle" font-size="9.4px" letter-spacing="-0.5">5,400</text><text x="1261.73" y="112" text-anchor="middle" font-size="9.4px" letter-spacing="-0.5">5,700</text><text x="1308.73" y="112" text-anchor="middle" font-size="9.4px" letter-spacing="-0.5">6,000</text><text x="1355.73" y="112" text-anchor="middle" font-size="9.4px" letter-spacing="-0.5">6,300</text><text x="1402.74" y="112" text-anchor="middle" font-size="9.4px" letter-spacing="-0.5">6,600</text><text x="1449.74" y="112" text-anchor="middle" font-size="9.4px" letter-spacing="-0.5">6,900</text><text x="1496.75" y="112" text-anchor="middle" font-size="9.4px" letter-spacing="-0.5">7,200</text><text x="1543.75" y="112" text-anchor="middle" font-size="9.4px" letter-spacing="-0.5">7,500</text><text x="1590.75" y="112" text-anchor="middle" font-size="9.4px" letter-spacing="-0.5">7,800</text><text x="1637.76" y="112" text-anchor="middle" font-size="9.4px" letter-spacing="-0.5">8,100</text><text x="1684.76" y="112" text-anchor="middle" font-size="9.4px" letter-spacing="-0.5">8,400</text><text x="1731.77" y="112" text-anchor="middle" font-size="9.4px" letter-spacing="-0.5">8,700</text><text x="1778.77" y="112" text-anchor="middle" font-size="9.4px" letter-spacing="-0.5">9,000</text><text x="1825.77" y="112" text-anchor="middle" font-size="9.4px" letter-spacing="-0.5">9,300</text><text x="1872.78" y="112" text-anchor="middle" font-size="9.4px" letter-spacing="-0.5">9,600</text><text x="1897.5" y="112.5" font-size="10px">[m]</text><path d="M368.5 313V142.5H1735.5V313" fill="none" stroke="#008000" stroke-width="1.2"/><path d="M368.5 227.5H1735.5" fill="none" stroke="#008000" stroke-width="1.2"/><path d="M524.5 217V312" stroke="#008000" stroke-width="1" stroke-dasharray="1 2" shape-rendering="crispEdges"/><path d="M681.5 196V312" stroke="#008000" stroke-width="1" stroke-dasharray="1 2" shape-rendering="crispEdges"/><path d="M882.5 196V312" stroke="#008000" stroke-width="1" stroke-dasharray="1 2" shape-rendering="crispEdges"/><path d="M1188.5 193V312" stroke="#008000" stroke-width="1" stroke-dasharray="1 2" shape-rendering="crispEdges"/><path d="M1325.5 202V312" stroke="#008000" stroke-width="1" stroke-dasharray="1 2" shape-rendering="crispEdges"/><path d="M1462.5 211V312" stroke="#008000" stroke-width="1" stroke-dasharray="1 2" shape-rendering="crispEdges"/><path d="M1599.5 217V312" stroke="#008000" stroke-width="1" stroke-dasharray="1 2" shape-rendering="crispEdges"/><rect x="711" y="192" width="2" height="120" fill="#008000"/><rect x="368" y="213" width="170" height="1.15" fill="#008000"/><rect x="538" y="212" width="26" height="1.15" fill="#008000"/><rect x="564" y="211" width="26" height="1.15" fill="#008000"/><rect x="590" y="210" width="26" height="1.15" fill="#008000"/><rect x="616" y="209" width="26" height="1.15" fill="#008000"/><rect x="642" y="208" width="26" height="1.15" fill="#008000"/><rect x="668" y="207" width="14" height="1.15" fill="#008000"/><rect x="682" y="193" width="7" height="1.15" fill="#008000"/><rect x="689" y="192" width="15" height="1.15" fill="#008000"/><rect x="704" y="191" width="8" height="1.15" fill="#008000"/><rect x="713" y="205" width="8" height="1.15" fill="#008000"/><rect x="721" y="204" width="15" height="1.15" fill="#008000"/><rect x="736" y="203" width="14" height="1.15" fill="#008000"/><rect x="750" y="202" width="14" height="1.15" fill="#008000"/><rect x="764" y="201" width="14" height="1.15" fill="#008000"/><rect x="778" y="200" width="14" height="1.15" fill="#008000"/><rect x="792" y="199" width="14" height="1.15" fill="#008000"/><rect x="806" y="198" width="14" height="1.15" fill="#008000"/><rect x="820" y="197" width="14" height="1.15" fill="#008000"/><rect x="834" y="196" width="15" height="1.15" fill="#008000"/><rect x="849" y="195" width="14" height="1.15" fill="#008000"/><rect x="863" y="194" width="14" height="1.15" fill="#008000"/><rect x="877" y="193" width="14" height="1.15" fill="#008000"/><rect x="891" y="192" width="15" height="1.15" fill="#008000"/><rect x="906" y="191" width="14" height="1.15" fill="#008000"/><rect x="920" y="190" width="15" height="1.15" fill="#008000"/><rect x="935" y="189" width="15" height="1.15" fill="#008000"/><rect x="950" y="188" width="14" height="1.15" fill="#008000"/><rect x="964" y="187" width="15" height="1.15" fill="#008000"/><rect x="979" y="186" width="15" height="1.15" fill="#008000"/><rect x="994" y="185" width="14" height="1.15" fill="#008000"/><rect x="1008" y="184" width="15" height="1.15" fill="#008000"/><rect x="1023" y="183" width="14" height="1.15" fill="#008000"/><rect x="1037" y="182" width="29" height="1.15" fill="#008000"/><rect x="1066" y="183" width="15" height="1.15" fill="#008000"/><rect x="1081" y="184" width="14" height="1.15" fill="#008000"/><rect x="1095" y="185" width="14" height="1.15" fill="#008000"/><rect x="1109" y="186" width="15" height="1.15" fill="#008000"/><rect x="1124" y="187" width="14" height="1.15" fill="#008000"/><rect x="1138" y="188" width="15" height="1.15" fill="#008000"/><rect x="1153" y="189" width="14" height="1.15" fill="#008000"/><rect x="1167" y="190" width="14" height="1.15" fill="#008000"/><rect x="1181" y="191" width="15" height="1.15" fill="#008000"/><rect x="1196" y="192" width="16" height="1.15" fill="#008000"/><rect x="1212" y="193" width="16" height="1.15" fill="#008000"/><rect x="1228" y="194" width="15" height="1.15" fill="#008000"/><rect x="1243" y="195" width="16" height="1.15" fill="#008000"/><rect x="1259" y="196" width="16" height="1.15" fill="#008000"/><rect x="1275" y="197" width="15" height="1.15" fill="#008000"/><rect x="1290" y="198" width="16" height="1.15" fill="#008000"/><rect x="1306" y="199" width="15" height="1.15" fill="#008000"/><rect x="1321" y="200" width="16" height="1.15" fill="#008000"/><rect x="1337" y="201" width="14" height="1.15" fill="#008000"/><rect x="1351" y="202" width="15" height="1.15" fill="#008000"/><rect x="1366" y="203" width="15" height="1.15" fill="#008000"/><rect x="1381" y="204" width="15" height="1.15" fill="#008000"/><rect x="1396" y="205" width="15" height="1.15" fill="#008000"/><rect x="1411" y="206" width="15" height="1.15" fill="#008000"/><rect x="1426" y="207" width="14" height="1.15" fill="#008000"/><rect x="1440" y="208" width="15" height="1.15" fill="#008000"/><rect x="1455" y="209" width="25" height="1.15" fill="#008000"/><rect x="1480" y="210" width="34" height="1.15" fill="#008000"/><rect x="1514" y="211" width="34" height="1.15" fill="#008000"/><rect x="1548" y="212" width="34" height="1.15" fill="#008000"/><rect x="1582" y="213" width="155" height="1.15" fill="#008000"/><rect x="681" y="193" width="1.2" height="15" fill="#008000"/><rect x="711" y="191" width="2" height="15" fill="#008000"/><rect x="368" y="312" width="1368" height="2" fill="#000"/><rect x="1050" y="181" width="4" height="134" fill="#007a00"/><text transform="translate(380,209.8) rotate(-90)" font-size="10.6px" fill="#008000">58,4%</text><text transform="translate(722.5,187.5) rotate(-90)" font-size="10.6px" fill="#008000">71,1%</text><text transform="translate(1048.5,178.2) rotate(-90)" font-size="10.6px" fill="#008000">76,6%</text><text transform="translate(1732.5,210.5) rotate(-90)" font-size="10.6px" fill="#008000">58,4%</text><text x="368" y="325" font-size="11.5px">1</text><text x="711" y="325" font-size="11.5px">2</text><text x="1052.3" y="325" font-size="11.5px" text-anchor="end">3</text><text x="1735.5" y="325" font-size="11.5px" text-anchor="end">4</text><text x="1753.5" y="146" font-size="11.7px">100%</text><text x="1753.5" y="231" font-size="11.7px">50%</text><text x="1750.5" y="317" font-size="11.7px">Utilization</text><path d="M368 398.5H1736" stroke="#808080" stroke-width="1" stroke-dasharray="1 2" shape-rendering="crispEdges"/><text x="1753" y="401.5" font-size="11.7px">4</text><path d="M368 441.5H1736" stroke="#808080" stroke-width="1" stroke-dasharray="1 2" shape-rendering="crispEdges"/><text x="1753" y="444.5" font-size="11.7px">3</text><path d="M368 484.5H1736" stroke="#808080" stroke-width="1" stroke-dasharray="1 2" shape-rendering="crispEdges"/><text x="1753" y="487.5" font-size="11.7px">2</text><path d="M368 527.5H1736" stroke="#808080" stroke-width="1" stroke-dasharray="1 2" shape-rendering="crispEdges"/><text x="1753" y="530.5" font-size="11.7px">1</text><rect x="367.9" y="527.5" width="1.3" height="42" fill="#000"/><rect x="523.9" y="527.5" width="1.3" height="42" fill="#000"/><rect x="680.9" y="527.5" width="1.3" height="42" fill="#000"/><rect x="711.9" y="527.5" width="1.3" height="42" fill="#000"/><rect x="881.9" y="527.5" width="1.3" height="42" fill="#000"/><rect x="1051.9" y="527.5" width="1.3" height="42" fill="#000"/><rect x="1187.9" y="527.5" width="1.3" height="42" fill="#000"/><rect x="1324.9" y="527.5" width="1.3" height="42" fill="#000"/><rect x="1461.9" y="527.5" width="1.3" height="42" fill="#000"/><rect x="1598.9" y="527.5" width="1.3" height="42" fill="#000"/><rect x="1734.9" y="527.5" width="1.3" height="42" fill="#000"/><rect x="368" y="568" width="1368" height="2" fill="#000"/><text x="1750.5" y="573" font-size="11.7px">Class</text><rect x="368.5" y="655" width="1367.5" height="85" fill="#d0d0d0"/><rect x="368.5" y="655" width="1367.5" height="1" fill="#3a3a3a"/><rect x="368.5" y="656" width="1367.5" height="1.5" fill="#e4e4e4"/><rect x="368.5" y="657.5" width="1367.5" height="1.8" fill="#3a3a3a"/><rect x="368.5" y="659.3" width="1367.5" height="2" fill="#e4e4e4"/><rect x="368.5" y="661.2" width="1367.5" height="1.2" fill="#3a3a3a"/><rect x="368.5" y="662.4" width="1367.5" height="1.8" fill="#e4e4e4"/><rect x="368.5" y="664" width="1367.5" height="1.2" fill="#3a3a3a"/><rect x="368.5" y="665.3" width="1367.5" height="1" fill="#dedede"/><rect x="368.5" y="731" width="1367.5" height="1.2" fill="#3a3a3a"/><rect x="368.5" y="732.2" width="1367.5" height="1.8" fill="#e4e4e4"/><rect x="368.5" y="734" width="1367.5" height="1.1" fill="#3a3a3a"/><rect x="368.5" y="735.1" width="1367.5" height="1.1" fill="#e4e4e4"/><rect x="368.5" y="736.2" width="1367.5" height="1.2" fill="#3a3a3a"/><rect x="368.5" y="737.4" width="1367.5" height="0.9" fill="#e4e4e4"/><rect x="368.5" y="738.3" width="1367.5" height="1.9" fill="#3a3a3a"/><rect x="368" y="655" width="1.2" height="85" fill="#3a3a3a"/><rect x="1735" y="655" width="1.2" height="85" fill="#3a3a3a"/><path d="M368 697.5H1735" stroke="#3a3a3a" stroke-width="1.4" stroke-dasharray="6 3 1 3"/><path d="M1033.5 655.5H1070.5V658L1066 659L1062 660.5L1058 661.5L1054.5 663.5L1053.5 666V729L1054.5 731.5L1058 733.5L1062 734.5L1066 736L1070.5 737V739.5H1033.5V737L1038 736L1042 734.5L1046 733.5L1049.5 731.5L1050.5 729V666L1049.5 663.5L1046 661.5L1042 660.5L1038 659L1033.5 658Z" fill="#a6cfdc" stroke="#3a3a3a" stroke-width="1"/><text x="1051.5" y="754.8" font-size="11.7px" text-anchor="middle" fill="#333">I(IPN) 200</text></svg>
<div class="r" style="left:227px;top:779px;width:98px;height:22px;background:#e1e1e1;border:1px solid #adadad;box-sizing:border-box"></div>
<svg class="r" style="left:245px;top:783px" width="14" height="14" viewBox="0 0 14 14" shape-rendering="crispEdges"><path d="M0 0h14v14h-14zM1 1H13V3H1zM1 4H4V6H1zM1 7H4V9H1zM1 10H4V13H1zM5 4H8V6H5zM5 7H8V9H5zM5 10H8V13H5zM9 4H13V6H9zM9 7H13V13H9z" fill="#15858a" fill-rule="evenodd"/><path d="M1 1H13V3H1zM1 4H4V6H1zM1 7H4V9H1zM1 10H4V13H1zM5 4H8V6H5zM5 7H8V9H5zM5 10H8V13H5zM9 4H13V6H9zM9 7H13V13H9z" fill="#fff"/></svg>
<div class="t" style="left:263.5px;top:784.77px;font-size:11.5px;line-height:11.5px;font-weight:bold;color:#000;">Analyse</div>
<div class="t" style="left:332px;top:783.64px;font-size:12px;line-height:12px;font-weight:normal;color:#000;">Analysis method:</div>
<div class="r" style="left:430px;top:780px;width:1482px;height:20px;background:#fff;border:1px solid #adadad;box-sizing:border-box"></div>
<div class="t" style="left:433.5px;top:783.64px;font-size:12px;line-height:12px;font-weight:normal;color:#000;">Maximum utilization envelope (2)</div>
<svg class="r" style="left:1898px;top:788px" width="9" height="5"><path d="M0 0h8l-4 4.5z" fill="#000"/></svg>
<div class="t" style="left:227px;top:817.84px;font-size:12px;line-height:12px;font-weight:normal;color:#000;">Member check:</div>
<div class="t" style="left:324px;top:817.84px;font-size:12px;line-height:12px;font-weight:normal;color:#0a960a;font-weight:600;">PASS</div>
<div class="t" style="left:367.6px;top:817.84px;font-size:12px;line-height:12px;font-weight:bold;color:#000;letter-spacing:-0.1px;">Maximal utilization: 76,6%; ZP 1 tlak+ohyb; X=4,365m.</div>
<div class="t" style="left:683.2px;top:817.84px;font-size:12px;line-height:12px;font-weight:normal;color:#00a000;">Slenderness ok</div>
<div class="r" style="left:227px;top:839px;width:1685px;height:1px;background:#a0a0a0;"></div>
<div class="r" style="left:227px;top:844px;width:98px;height:22px;background:#e1e1e1;border:1px solid #adadad;box-sizing:border-box"></div>
<div class="r" style="left:227px;top:876px;width:98px;height:22px;background:#cccccc;border:1px solid #bfbfbf;box-sizing:border-box"></div>
<div class="r" style="left:228px;top:908px;width:98px;height:22px;background:#cccccc;border:1px solid #bfbfbf;box-sizing:border-box"></div>
<div class="r" style="left:227px;top:940px;width:98px;height:22px;background:#e1e1e1;border:1px solid #adadad;box-sizing:border-box"></div>
<div class="r" style="left:227px;top:972px;width:98px;height:22px;background:#e1e1e1;border:1px solid #adadad;box-sizing:border-box"></div>
<div class="t" style="left:249px;top:848.54px;font-size:12px;line-height:12px;font-weight:normal;color:#000;"><u>A</u>dd</div>
<div class="t" style="left:249px;top:880.54px;font-size:12px;line-height:12px;font-weight:normal;color:#9a9a9a;"><u>E</u>dit</div>
<div class="t" style="left:250px;top:912.54px;font-size:12px;line-height:12px;font-weight:normal;color:#9a9a9a;"><u>R</u>emove</div>
<div class="t" style="left:249px;top:944.54px;font-size:12px;line-height:12px;font-weight:normal;color:#000;">Section</div>
<div class="t" style="left:249px;top:976.54px;font-size:12px;line-height:12px;font-weight:normal;color:#000;">Printing</div>
<svg class="r" style="left:231px;top:848px" width="13" height="13" viewBox="0 0 13 13"><path d="M6.5 0.5v12M0.5 6.5h12" stroke="#10a010" stroke-width="3"/></svg>
<svg class="r" style="left:231px;top:880px" width="13" height="12" viewBox="0 0 13 12"><path d="M11 0.5v6H4" fill="none" stroke="#9a9a9a" stroke-width="2.2"/><path d="M1 6.5l4-4v8z" fill="#9a9a9a"/></svg>
<svg class="r" style="left:233px;top:913px" width="11" height="11" viewBox="0 0 11 11"><path d="M1 1l9 9M10 1l-9 9" stroke="#9a9a9a" stroke-width="1.6"/></svg>
<svg class="r" style="left:231px;top:943px" width="12" height="16" viewBox="0 0 12 16"><path d="M1 1h10v1.5l-3.5 1.5v8l3.5 1.5v1.5h-10v-1.5l3.5-1.5v-8l-3.5-1.5z" fill="#a6cfdc" stroke="#555" stroke-width="0.9"/></svg>
<svg class="r" style="left:230px;top:976px" width="15" height="15" viewBox="0 0 15 15"><rect x="3.5" y="0.5" width="8" height="4" fill="#fff" stroke="#333" stroke-width="1"/><path d="M1.5 4.5h12v7h-12z" fill="#c8b48c" stroke="#333" stroke-width="1"/><rect x="4" y="8" width="7" height="6.5" fill="#fff" stroke="#333" stroke-width="1"/><path d="M6 10l3 3M9 10l-3 3" stroke="#15858a" stroke-width="1"/></svg>
<div class="r" style="left:333px;top:844px;width:413px;height:206px;background:#f7f7f7;border:1px solid #0078d7;box-sizing:border-box"></div>
<div class="r" style="left:334px;top:845px;width:411px;height:37px;background:#e3e3e3;"></div>
<div class="r" style="left:334px;top:883px;width:48px;height:18px;background:#e3e3e3;"></div>
<div class="r" style="left:383px;top:883px;width:362px;height:18px;background:#fafafa;"></div>
<div class="t" style="left:358.5px;top:887.14px;font-size:12px;line-height:12px;font-weight:normal;color:#000;transform:translateX(-50%);">1</div>
<div class="t" style="left:385px;top:887.14px;font-size:12px;line-height:12px;font-weight:normal;color:#000;width:213.5px;clip-path:inset(-6px 0 -6px -6px);white-space:nowrap;letter-spacing:0.1px;">Řez A vlevo</div>
<div class="t" style="left:671.5px;top:887.14px;font-size:12px;line-height:12px;font-weight:normal;color:#000;transform:translateX(-100%);">0,000</div>
<div class="t" style="left:744px;top:887.14px;font-size:12px;line-height:12px;font-weight:normal;color:#000;transform:translateX(-100%);">58,4</div>
<div class="r" style="left:334px;top:902px;width:48px;height:18px;background:#e3e3e3;"></div>
<div class="r" style="left:383px;top:902px;width:362px;height:18px;background:#fafafa;"></div>
<div class="t" style="left:358.5px;top:906.14px;font-size:12px;line-height:12px;font-weight:normal;color:#000;transform:translateX(-50%);">2</div>
<div class="t" style="left:385px;top:906.14px;font-size:12px;line-height:12px;font-weight:normal;color:#000;width:213.5px;clip-path:inset(-6px 0 -6px -6px);white-space:nowrap;letter-spacing:0.1px;">Řez číslo 2</div>
<div class="t" style="left:671.5px;top:906.14px;font-size:12px;line-height:12px;font-weight:normal;color:#000;transform:translateX(-100%);">2,190</div>
<div class="t" style="left:744px;top:906.14px;font-size:12px;line-height:12px;font-weight:normal;color:#000;transform:translateX(-100%);">71,1</div>
<div class="r" style="left:334px;top:921px;width:48px;height:18px;background:#abc8e8;"></div>
<div class="r" style="left:383px;top:921px;width:362px;height:18px;background:#c4dcf5;"></div>
<div class="t" style="left:358.5px;top:925.14px;font-size:12px;line-height:12px;font-weight:normal;color:#000;transform:translateX(-50%);">3</div>
<div class="t" style="left:385px;top:925.14px;font-size:12px;line-height:12px;font-weight:normal;color:#000;width:213.5px;clip-path:inset(-6px 0 -6px -6px);white-space:nowrap;letter-spacing:0.1px;">Critical member cut "Member 1" - section</div>
<div class="t" style="left:671.5px;top:925.14px;font-size:12px;line-height:12px;font-weight:normal;color:#000;transform:translateX(-100%);">4,365</div>
<div class="t" style="left:744px;top:925.14px;font-size:12px;line-height:12px;font-weight:normal;color:#000;transform:translateX(-100%);">76,6</div>
<div class="r" style="left:334px;top:940px;width:48px;height:18px;background:#e3e3e3;"></div>
<div class="r" style="left:383px;top:940px;width:362px;height:18px;background:#fafafa;"></div>
<div class="t" style="left:358.5px;top:944.14px;font-size:12px;line-height:12px;font-weight:normal;color:#000;transform:translateX(-50%);">4</div>
<div class="t" style="left:385px;top:944.14px;font-size:12px;line-height:12px;font-weight:normal;color:#000;width:213.5px;clip-path:inset(-6px 0 -6px -6px);white-space:nowrap;letter-spacing:0.1px;">Řez B vpravo</div>
<div class="t" style="left:671.5px;top:944.14px;font-size:12px;line-height:12px;font-weight:normal;color:#000;transform:translateX(-100%);">8,730</div>
<div class="t" style="left:744px;top:944.14px;font-size:12px;line-height:12px;font-weight:normal;color:#000;transform:translateX(-100%);">58,4</div>
<div class="r" style="left:334px;top:882px;width:411px;height:1px;background:#a0a0a0;"></div>
<div class="r" style="left:334px;top:901px;width:411px;height:1px;background:#a0a0a0;"></div>
<div class="r" style="left:334px;top:920px;width:411px;height:1px;background:#a0a0a0;"></div>
<div class="r" style="left:334px;top:939px;width:411px;height:1px;background:#a0a0a0;"></div>
<div class="r" style="left:334px;top:958px;width:411px;height:1px;background:#a0a0a0;"></div>
<div class="r" style="left:382px;top:845px;width:1px;height:114px;background:#a0a0a0;"></div>
<div class="r" style="left:600px;top:845px;width:1px;height:114px;background:#a0a0a0;"></div>
<div class="r" style="left:673px;top:845px;width:1px;height:114px;background:#a0a0a0;"></div>
<div class="t" style="left:358.3px;top:849.14px;font-size:12px;line-height:12px;font-weight:normal;color:#000;transform:translateX(-50%);">Number</div>
<div class="t" style="left:491.2px;top:849.14px;font-size:12px;line-height:12px;font-weight:normal;color:#000;transform:translateX(-50%);">Identification</div>
<div class="t" style="left:491.2px;top:867.84px;font-size:12px;line-height:12px;font-weight:normal;color:#000;transform:translateX(-50%);">of cross-section</div>
<div class="t" style="left:636.5px;top:849.14px;font-size:12px;line-height:12px;font-weight:normal;color:#000;transform:translateX(-50%);">Coordinates</div>
<div class="t" style="left:636.5px;top:867.84px;font-size:12px;line-height:12px;font-weight:normal;color:#000;transform:translateX(-50%);">[m]</div>
<div class="t" style="left:708.6px;top:849.14px;font-size:12px;line-height:12px;font-weight:normal;color:#000;transform:translateX(-50%);">Utilization</div>
<div class="t" style="left:708.6px;top:867.84px;font-size:12px;line-height:12px;font-weight:normal;color:#000;transform:translateX(-50%);">[%]</div>
<div class="r" style="left:753px;top:844px;width:1159px;height:206px;background:#fff;border:1px solid #adadad;box-sizing:border-box;overflow:hidden"></div>
<div class="r" style="left:1893px;top:845px;width:18px;height:204px;background:#f0f0f0;"></div>
<svg class="r" style="left:1896px;top:850px" width="11" height="7"><path d="M0.5 6h10l-5-5.5z" fill="#606060"/></svg>
<svg class="r" style="left:1896px;top:1035px" width="11" height="7"><path d="M0.5 0.5h10l-5 5.5z" fill="#606060"/></svg>
<div class="r" style="left:1896px;top:862px;width:11px;height:17px;background:#cdcdcd;"></div>
<div class="t" style="left:909.2px;top:905.04px;font-size:12px;line-height:12px;font-weight:normal;color:#00a000;">Pass</div>
<div class="t" style="left:960px;top:973.34px;font-size:12px;line-height:12px;font-weight:normal;color:#00a000;">Pass</div>
<div class="t" style="left:960px;top:1006.84px;font-size:12px;line-height:12px;font-weight:normal;color:#00a000;">Pass</div>
<div class="t" style="left:763.3px;top:852.54px;font-size:12px;line-height:12px;font-weight:normal;color:#000;white-space:nowrap;"><b>Section analysis X=4,365m; 76,6%; Load: ZP 1 tlak+ohyb.</b></div>
<div class="t" style="left:763.3px;top:871.54px;font-size:12px;line-height:12px;font-weight:normal;color:#000;white-space:nowrap;"><b>Results for load:</b> ZP 1 tlak+ohyb;&nbsp; <b>Cross-section class:</b> 1</div>
<div class="t" style="left:763.3px;top:887.54px;font-size:12px;line-height:12px;font-weight:normal;color:#000;white-space:nowrap;"><b>Check of shear due to shear force V<span style="font-size:8.5px;position:relative;top:3px">z</span>:</b></div>
<div class="t" style="left:772px;top:905.04px;font-size:12px;line-height:12px;font-weight:normal;color:#000;white-space:nowrap;">20,000 kN &lt; 211,691 kN</div>
<div class="t" style="left:763.3px;top:921.14px;font-size:12px;line-height:12px;font-weight:normal;color:#000;white-space:nowrap;">Internal forces: N = -55,000 kN;&nbsp; M<span style="font-size:8.5px;position:relative;top:3px">y</span> = 14,000 kNm;&nbsp; M<span style="font-size:8.5px;position:relative;top:3px">z</span> = 0,000 kNm</div>
<div class="t" style="left:763.3px;top:939.24px;font-size:12px;line-height:12px;font-weight:normal;color:#000;white-space:nowrap;"><b>Critical combination check: buckling compression and bending moment:</b></div>
<div class="t" style="left:766.8px;top:955.24px;font-size:12px;line-height:12px;font-weight:normal;color:#000;white-space:nowrap;"><b>Buckling Y:</b> Resistances: N<span style="font-size:8.5px;position:relative;top:3px">R</span> = -704,193 kN; M<span style="font-size:8.5px;position:relative;top:3px">y,R</span> = 51,052 kNm</div>
<div class="t" style="left:763.3px;top:973.34px;font-size:12px;line-height:12px;font-weight:normal;color:#000;white-space:nowrap;">| 0,078 + 0,274 + 0,0 | = | 0,352 | &lt; 1</div>
<div class="t" style="left:766.8px;top:988.84px;font-size:12px;line-height:12px;font-weight:normal;color:#000;white-space:nowrap;"><b>Buckling Z:</b> Resistances: N<span style="font-size:8.5px;position:relative;top:3px">R</span> = -110,123 kN; M<span style="font-size:8.5px;position:relative;top:3px">y,R</span> = 52,569 kNm</div>
<div class="t" style="left:763.3px;top:1006.84px;font-size:12px;line-height:12px;font-weight:normal;color:#000;white-space:nowrap;">| 0,499 + 0,266 + 0,0 | = | 0,766 | &lt; 1</div>
<div class="t" style="left:763.3px;top:1023.84px;font-size:12px;line-height:12px;font-weight:normal;color:#000;white-space:nowrap;"><b>Member slenderness check:</b>&nbsp; member slenderness: 234,2&nbsp; limit slenderness: 250,0</div>
<div class="r" style="left:754px;top:1036px;width:1138px;height:12.5px;overflow:hidden"><div class="t" style="left:9.3px;top:4.8px;font-size:12px;line-height:12px;color:#00a000">Member slenderness ok</div></div>
<svg class="r" style="left:1907px;top:1067px" width="11" height="11"><g fill="#a0a0a0"><rect x="8" y="2" width="1.5" height="1.5"/><rect x="5" y="5" width="1.5" height="1.5"/><rect x="8" y="5" width="1.5" height="1.5"/><rect x="2" y="8" width="1.5" height="1.5"/><rect x="5" y="8" width="1.5" height="1.5"/><rect x="8" y="8" width="1.5" height="1.5"/></g></svg>
<div class="r" style="left:0;top:0;width:1920px;height:1080px;border:1px solid #0063b1;border-radius:8px;box-sizing:border-box"></div></div></body></html>
